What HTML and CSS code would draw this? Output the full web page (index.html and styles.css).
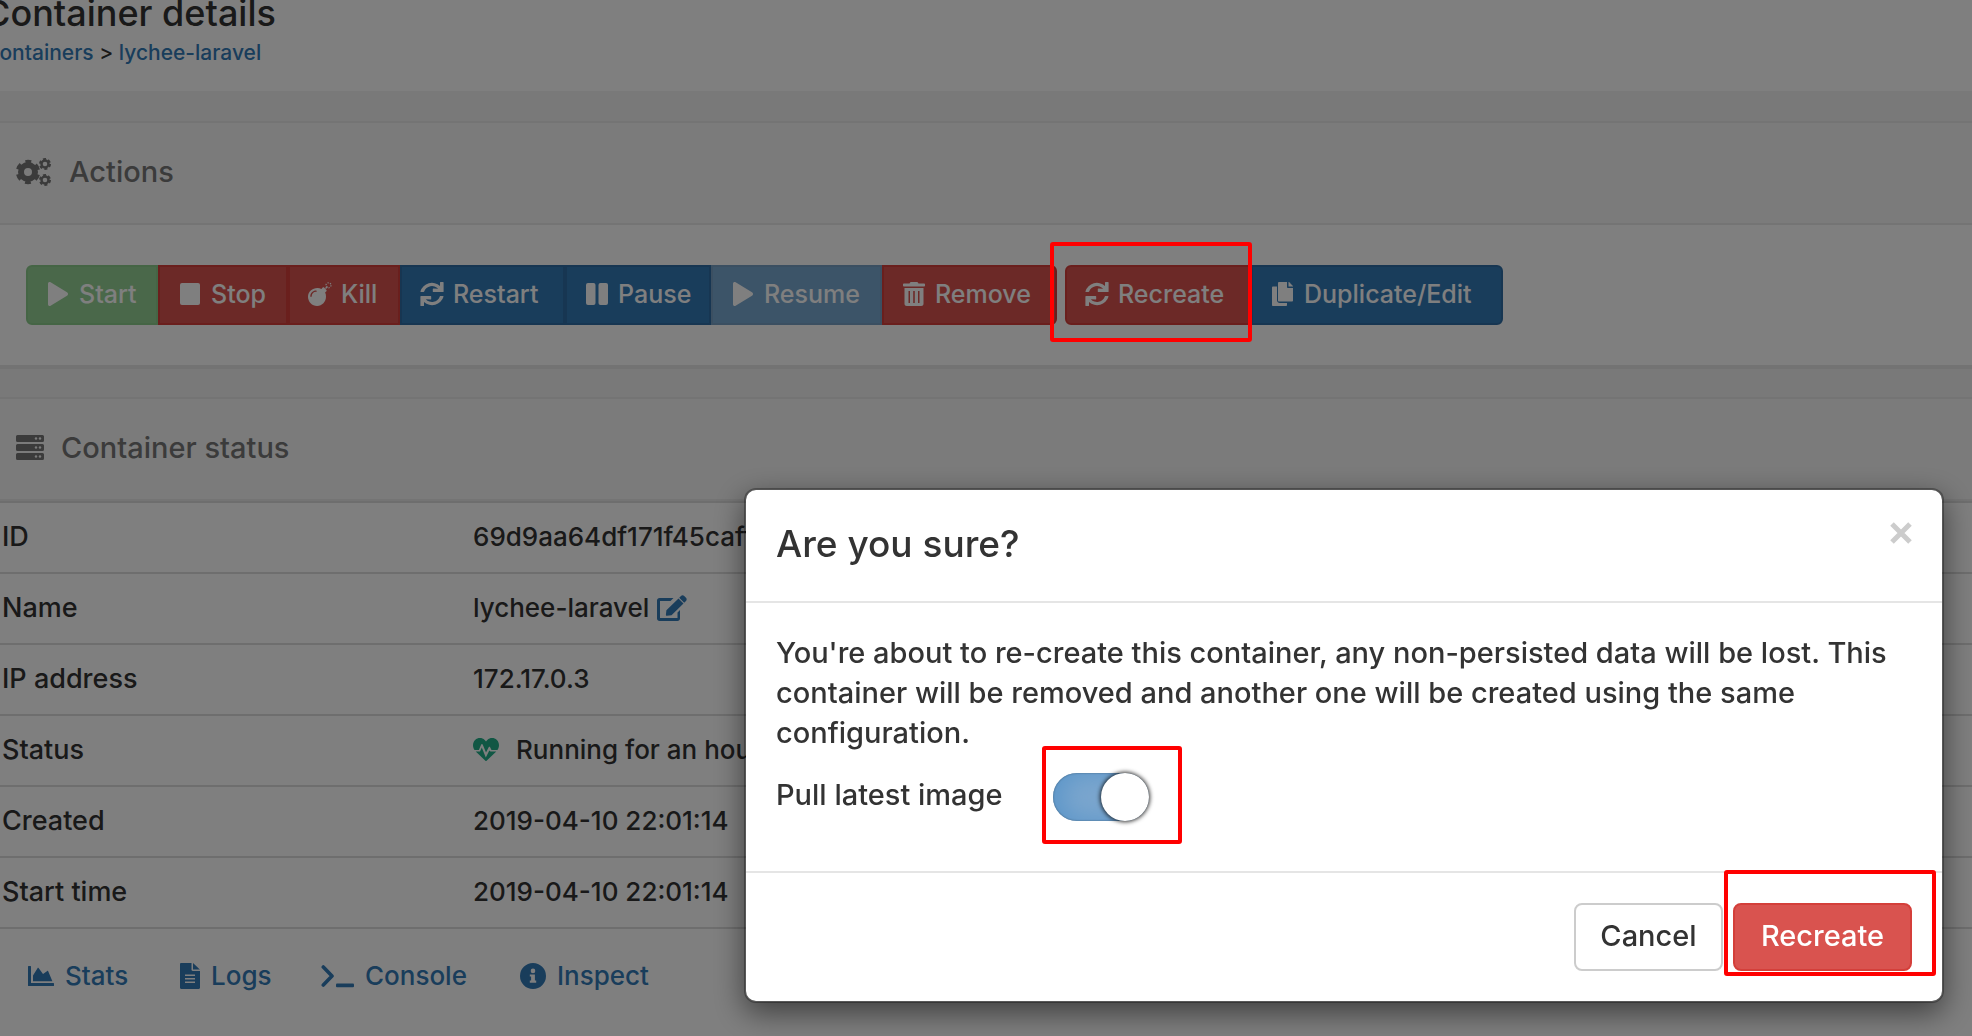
FILE: index.html
```html
<!DOCTYPE html>
<html lang="en">
<head>
<meta charset="utf-8">
<title>Container details</title>
<link rel="stylesheet" href="styles.css">
</head>
<body>
<svg class="sprite" aria-hidden="true">
  <symbol id="play" viewBox="0 0 22 24"><path d="M1 1.8C1 .3 2.400-.4 3.600.3L20 10.300c1.400.8 1.400 2.600 0 3.400L3.600 23.700C2.400 24.400 1 23.600 1 22.200z"/></symbol>
  <symbol id="stop" viewBox="0 0 22 24"><rect x="1" y="1" width="20" height="22" rx="2"/></symbol>
  <symbol id="pause" viewBox="0 0 22 24"><rect x="0" y="1" width="9.500" height="22" rx="2"/><rect x="12.500" y="1" width="9.500" height="22" rx="2"/></symbol>
  <symbol id="bomb" viewBox="0 0 24 24"><path fill-rule="evenodd" d="M9.500 6c1.400 0 2.700.3 3.900.9l1.300-1.300c.4-.4 1-.4 1.400 0l2.300 2.300c.4.4.4 1 0 1.400l-1.300 1.300c.6 1.100.9 2.500.9 3.900 0 5.200-3.900 9.500-8.900 9.500S0 19.700 0 14.700 4.300 6 9.500 6zM3.700 14.200c0-2.500 1.900-4.400 4.400-4.400.9 0 .9-1.400 0-1.400-3.200 0-5.800 2.600-5.800 5.800 0 .9 1.400.9 1.400 0z"/><path d="M17 6l2-2 1 1-2 2z"/><g fill="none" stroke="currentColor" stroke-width="1.200" stroke-dasharray="1.300 1.300"><circle cx="20.500" cy="3.300" r="2.500"/></g></symbol>
  <symbol id="sync" viewBox="0 0 24 24"><path d="M23 0h-2.400c-.4 0-.6.300-.6.600v3.300A12 12 0 0 0 .5 9.300c-.1.400.2.700.5.700h2.600c.3 0 .5-.2.600-.4A8.300 8.300 0 0 1 18.200 6.700l-4.800-.2c-.3 0-.6.2-.6.600v2.300c0 .3.300.6.600.6H23c.4 0 .6-.3.600-.6V.6c0-.3-.2-.6-.6-.6zM1 24h2.400c.4 0 .6-.3.600-.6v-3.300a12 12 0 0 0 19.500-5.400c.1-.4-.2-.7-.5-.7h-2.600c-.3 0-.5.2-.6.400a8.300 8.300 0 0 1-14 2.900l4.800.2c.3 0 .6-.2.600-.6v-2.300c0-.3-.3-.6-.6-.6H1c-.4 0-.6.3-.6.6v8.800c0 .3.200.6.6.6z"/></symbol>
  <symbol id="trash" viewBox="0 0 22 24"><path fill-rule="evenodd" d="M.8 1.500H6.500l.6-1C7.300.2 7.500 0 7.900 0h6.200c.4 0 .6.200.8.500l.6 1h5.700c.4 0 .8.300.8.800v1.500c0 .4-.4.700-.8.700H.8C.4 4.500 0 4.200 0 3.800V2.300c0-.5.400-.8.800-.8zM1.500 6h19v15.700c0 1.300-1 2.300-2.300 2.300H3.800c-1.300 0-2.300-1-2.300-2.300zM5.500 9v12H7V9zm4.700 0v12h1.600V9zM15 9v12h1.500V9z"/></symbol>
  <symbol id="copy" viewBox="0 0 22 24"><path d="M15 21v1.900c0 .6-.5 1.100-1.100 1.100H1.100C.5 24 0 23.500 0 22.900V5.600c0-.6.500-1.100 1.100-1.100H5v13.700C5 19.700 6.200 21 7.800 21z"/><path d="M15 4.900V0H7.100C6.500 0 6 .5 6 1.100v17.300c0 .6.500 1.100 1.100 1.100h12.800c.6 0 1.100-.5 1.100-1.100V6h-4.900C15.500 6 15 5.500 15 4.900z"/><path d="M16.500 0v4.500H21c0-.3-.1-.6-.3-.8L17.300.3c-.2-.2-.5-.3-.8-.3z"/></symbol>
  <symbol id="cogs" viewBox="0 0 36 28"><g fill="none" stroke="currentColor"><circle cx="12" cy="14" r="7" stroke-width="6"/><circle cx="12" cy="14" r="10.200" stroke-width="4" stroke-dasharray="5.600 5.080" stroke-dashoffset="-2.500"/><circle cx="29" cy="6" r="3.500" stroke-width="2.400"/><circle cx="29" cy="6" r="5" stroke-width="2" stroke-dasharray="3 2.230"/><circle cx="29" cy="22" r="3.500" stroke-width="2.400"/><circle cx="29" cy="22" r="5" stroke-width="2" stroke-dasharray="3 2.230"/></g></symbol>
  <symbol id="server" viewBox="0 0 28 26"><path fill-rule="evenodd" d="M1.500 0h25A1.500 1.500 0 0 1 28 1.500v4A1.500 1.500 0 0 1 26.500 7h-25A1.500 1.500 0 0 1 0 5.500v-4A1.500 1.500 0 0 1 1.500 0zM1.500 9h25a1.500 1.500 0 0 1 1.500 1.500v4a1.500 1.500 0 0 1-1.500 1.500h-25A1.500 1.500 0 0 1 0 14.500v-4A1.500 1.500 0 0 1 1.500 9zM1.500 18h25a1.500 1.500 0 0 1 1.500 1.500v4a1.500 1.500 0 0 1-1.500 1.500h-25A1.500 1.500 0 0 1 0 23.500v-4A1.500 1.500 0 0 1 1.500 18z"/><g class="server-lights"><circle cx="20" cy="3.500" r="1.200"/><circle cx="24" cy="3.500" r="1.200"/><circle cx="20" cy="12.500" r="1.200"/><circle cx="24" cy="12.500" r="1.200"/><circle cx="20" cy="21.500" r="1.200"/><circle cx="24" cy="21.500" r="1.200"/></g></symbol>
  <symbol id="edit" viewBox="0 0 30 26"><path d="M20.500 17.500l2.500-2.500v8.500c0 1.400-1.100 2.500-2.500 2.500h-18C1.100 26 0 24.900 0 23.500v-18C0 4.100 1.100 3 2.500 3h14L13.500 6H3v17h17.500z"/><path d="M21.500 3.500l5 5L14.500 20.300l-4.600.5c-.6.100-1.100-.4-1-1l.5-4.600zM29 5.900l-1.800 1.800-5-5L24 .9c.9-.9 2.300-.9 3.200 0l1.800 1.800c.9.900.9 2.300 0 3.200z"/></symbol>
  <symbol id="heartbeat" viewBox="0 0 26 23"><path d="M16.300 12.400l-3.500 7-4-9.900L7 13.500H2.700L12.400 22.700c.3.400.9.400 1.200 0l9.700-9.200h-5.800zM23.900 2C21.200-.6 17-.6 14.300 2L13 3.400 11.700 2C9 -.6 4.800-.6 2.100 2c-2.600 2.600-2.800 6.800-.5 9.900h4.300l2.300-5.500c.3-.7 1.200-.7 1.500 0l3.300 8.200 2.700-5.400c.3-.6 1.100-.6 1.400 0l1.400 2.700h5.900c2.300-3.100 2.100-7.300-.5-9.900z"/></symbol>
  <symbol id="chart" viewBox="0 0 26 20"><path d="M3 17h22.400c.4 0 .6.300.6.600v1.800c0 .3-.2.600-.6.600H.6c-.4 0-.6-.3-.6-.6V.6C0 .3.200 0 .6 0h1.800c.4 0 .6.300.6.600zM19.300 4.900L15 8 10.600 2.100c-.3-.4-.9-.3-1.100.1L5 9.500V15.200h19.400L20.200 5.200c-.1-.4-.6-.5-.9-.3z"/></symbol>
  <symbol id="file" viewBox="0 0 20 26"><path fill-rule="evenodd" d="M11.500 0v6.800c0 .7.600 1.200 1.200 1.200H20v16.800c0 .7-.5 1.200-1.200 1.200H1.200C.5 26 0 25.500 0 24.800V1.200C0 .5.500 0 1.200 0zM5 11.500v1.400h10v-1.400zm0 3.500v1.400h10V15zm0 3.500v1.400h10v-1.400z"/><path d="M13 0l6.600 6.200.4.400H13z"/></symbol>
  <symbol id="terminal" viewBox="0 0 33 24"><path fill="none" stroke="currentColor" stroke-width="3.600" stroke-linecap="round" stroke-linejoin="round" d="M2.300 3l8.700 9-8.700 9"/><rect x="15" y="19.500" width="18" height="3.800" rx="1"/></symbol>
  <symbol id="info" viewBox="0 0 26 26"><path fill-rule="evenodd" d="M13 0a13 13 0 1 1 0 26 13 13 0 0 1 0-26zM13 5.600a2.300 2.300 0 1 0 0 4.600 2.300 2.300 0 0 0 0-4.600zM9.800 11.500v2h1.300v4H9.800v2.200h6.400v-2.200h-1.300v-6z"/></symbol>
  <symbol id="times" viewBox="0 0 22 22"><path fill="none" stroke="currentColor" stroke-width="5" d="M2 2l18 18M20 2L2 20"/></symbol>
</svg>

<header class="page-head">
  <h1 class="page-title">Container details</h1>
  <nav class="breadcrumb"><a href="#">Containers</a> &gt; <a href="#">lychee-laravel</a></nav>
</header>

<main>
  <section class="widget">
    <h2 class="widget-head"><svg class="icon-cogs"><use href="#cogs"/></svg>Actions</h2>
    <div class="actions">
      <div class="btn-group group-run">
        <button class="btn success" disabled><svg><use href="#play"/></svg>Start</button>
        <button class="btn danger"><svg><use href="#stop"/></svg>Stop</button>
        <button class="btn danger"><svg><use href="#bomb"/></svg>Kill</button>
        <button class="btn primary"><svg><use href="#sync"/></svg>Restart</button>
        <button class="btn primary"><svg><use href="#pause"/></svg>Pause</button>
        <button class="btn primary" disabled><svg><use href="#play"/></svg>Resume</button>
        <button class="btn danger"><svg><use href="#trash"/></svg>Remove</button>
      </div>
      <div class="btn-group group-make">
        <button class="btn danger"><svg><use href="#sync"/></svg>Recreate</button>
        <button class="btn primary"><svg><use href="#copy"/></svg>Duplicate/Edit</button>
        <span class="mark mark-action"></span>
      </div>
    </div>
  </section>

  <section class="widget widget-status">
    <h2 class="widget-head"><svg class="icon-server"><use href="#server"/></svg>Container status</h2>
    <table class="details">
      <tbody>
        <tr><th scope="row">ID</th><td>69d9aa64df171f45caff</td></tr>
        <tr><th scope="row">Name</th><td><span class="cell">lychee-laravel<a href="#" aria-label="Edit name"><svg class="icon-edit"><use href="#edit"/></svg></a></span></td></tr>
        <tr><th scope="row">IP address</th><td>172.17.0.3</td></tr>
        <tr><th scope="row">Status</th><td><span class="cell cell-status"><svg class="icon-heart"><use href="#heartbeat"/></svg>Running for an hour</span></td></tr>
        <tr><th scope="row">Created</th><td>2019-04-10 22:01:14</td></tr>
        <tr><th scope="row">Start time</th><td>2019-04-10 22:01:14</td></tr>
      </tbody>
    </table>
    <nav class="tools">
      <a href="#"><svg class="icon-chart"><use href="#chart"/></svg>Stats</a>
      <a href="#"><svg class="icon-file"><use href="#file"/></svg>Logs</a>
      <a href="#"><svg class="icon-terminal"><use href="#terminal"/></svg>Console</a>
      <a href="#"><svg class="icon-info"><use href="#info"/></svg>Inspect</a>
    </nav>
  </section>
</main>

<div class="backdrop">
  <div class="modal" role="dialog" aria-modal="true" aria-labelledby="dialog-title">
    <div class="modal-head">
      <h2 class="modal-title" id="dialog-title">Are you sure?</h2>
      <button class="close" aria-label="Close"><svg><use href="#times"/></svg></button>
    </div>
    <div class="modal-body">
      <p class="message">You're about to re-create this container, any non-persisted data will be lost. This container will be removed and another one will be created using the same configuration.</p>
      <div class="option">
        <label for="pull">Pull latest image</label>
        <span class="switch-wrap"><input class="switch" type="checkbox" id="pull" checked><span class="mark mark-switch"></span></span>
      </div>
    </div>
    <div class="modal-foot">
      <button class="dialog-btn cancel">Cancel</button>
      <span class="confirm-wrap"><button class="dialog-btn confirm">Recreate</button><span class="mark mark-confirm"></span></span>
    </div>
  </div>
</div>
</body>
</html>
```

FILE: styles.css
```css
* { box-sizing: border-box; }
html { overflow: hidden; }
body {
  margin: 0;
  background: #f3f3f3;
  color: #333;
  font: 500 26px/40px Inter, "Open Sans", sans-serif;
}
a { color: #337ab7; text-decoration: none; }
h1, h2, p { margin: 0; font-weight: 500; }
button, input { font: inherit; margin: 0; }
svg { fill: currentColor; flex: none; display: block; }
.sprite { position: absolute; width: 0; height: 0; }

.page-head { background: #fff; margin: -8px 0 0 -16px; padding-bottom: 24px; }
.page-title { font-size: 36px; line-height: 42px; }
.breadcrumb { margin-top: 4px; font-size: 21px; line-height: 29px; }

.widget { margin-top: 30px; background: #fff; border-top: 2px solid #e9e9e9; border-bottom: 4px solid #e6e6e6; }
.widget-status { margin-top: 28px; border-bottom: 0; }
.widget-head {
  display: flex; align-items: center; gap: 17px;
  height: 102px; padding: 0 16px 2px;
  background: #f6f6f6; border-bottom: 2px solid #e9e9e9;
  color: #767676; font-size: 29px;
}
.icon-cogs { width: 36px; height: 28px; }
.icon-server { width: 28px; height: 26px; }
.server-lights { fill: #f6f6f6; }

.actions { display: flex; gap: 8px; padding: 40px 26px; }
.btn-group { display: grid; position: relative; border-radius: 6px; }
.group-run { grid-template-columns: 132px 130px 112px 165px 146px 171px 175px; }
.group-make { grid-template-columns: 186px 252px; }
.btn {
  display: flex; align-items: center; justify-content: flex-start; gap: 9px;
  height: 60px; padding: 0 0 2px 18px; border: 2px solid; color: #fff;
  font-size: 25px; line-height: 36px; white-space: nowrap;
}
.btn svg { width: 24px; height: 24px; }
.btn:first-child { border-radius: 6px 0 0 6px; }
.btn:nth-last-child(1 of .btn) { border-radius: 0 6px 6px 0; }
.btn:disabled { opacity: .65; }
.success { background: #5cb85c; border-color: #4cae4c; }
.danger { background: #d9534f; border-color: #d43f3a; }
.primary { background: #337ab7; border-color: #2e6da4; }

.details { width: 100%; table-layout: fixed; border-collapse: collapse; border-bottom: 2px solid #ddd; }
.details tr { height: 71px; border-top: 2px solid #ddd; }
.details th { width: 470px; padding: 0 2px 2px; text-align: left; font-size: 27px; font-weight: 500; }
.details td { padding: 0 3px 2px; }
.cell { display: flex; align-items: center; gap: 8px; }
.cell-status { gap: 17px; }
.icon-edit { width: 30px; height: 26px; }
.icon-heart { width: 26px; height: 23px; color: #23ae89; }

.tools { display: grid; grid-template-columns: 152px 141px 199px auto; padding: 27px 28px 60px; }
.tools a { display: flex; align-items: center; gap: 11px; }
.icon-chart { width: 26px; height: 20px; }
.icon-file { width: 20px; height: 26px; }
.icon-terminal { width: 33px; height: 24px; }
.icon-info { width: 26px; height: 26px; }

.backdrop {
  position: fixed; inset: 0; padding: 488px 28px 0;
  display: flex; justify-content: flex-end; align-items: flex-start;
  background: rgba(0, 0, 0, .5);
}
.modal {
  width: 100%; max-width: 1200px;
  background: #fff; background-clip: padding-box;
  border: 2px solid rgba(0, 0, 0, .3); border-radius: 12px;
  box-shadow: 0 10px 30px rgba(0, 0, 0, .5);
  font-size: 29px;
}
.modal-head { display: flex; justify-content: space-between; padding: 32px 30px 35px; border-bottom: 2px solid #e5e5e5; }
.modal-title { font-size: 37px; line-height: 44px; }
.close { width: 22px; height: 22px; padding: 0; border: 0; background: none; color: #ccc; }
.close svg { width: 22px; height: 22px; }
.modal-body { padding: 30px; }
.message { margin-bottom: 16px; }
.option { display: flex; align-items: flex-end; height: 52px; margin-bottom: 20px; }
.option label { width: 277px; line-height: 52px; }
.switch-wrap, .confirm-wrap { position: relative; display: flex; }
.switch {
  appearance: none; width: 96px; height: 48px; border-radius: 24px;
  background: #7ba6ce;
  box-shadow: inset 0 0 2px rgba(0, 0, 0, .4), inset 8px 0 24px #5c96c9;
}
.switch::after {
  content: ""; display: block; width: 48px; height: 48px; margin-left: auto;
  border-radius: 50%; background: #fff; box-shadow: 0 0 4px 1px rgba(0, 0, 0, .8);
}
.modal-foot { display: flex; justify-content: flex-end; gap: 10px; padding: 30px; border-top: 2px solid #e5e5e5; }
.dialog-btn { height: 68px; padding: 0 0 2px; border: 2px solid; border-radius: 8px; }
.cancel { width: 149px; background: #fff; border-color: #ccc; color: #333; }
.confirm { width: 179px; background: #d9534f; border-color: #d43f3a; color: #fff; }

.mark { position: absolute; z-index: 2; border: 4px solid #f00; border-radius: 3px; pointer-events: none; }
.mark-action { left: -15px; top: -23px; width: 202px; height: 100px; }
.mark-switch { left: -11px; top: -27px; width: 140px; height: 98px; }
.mark-confirm { left: -9px; top: -33px; width: 212px; height: 106px; }
```
